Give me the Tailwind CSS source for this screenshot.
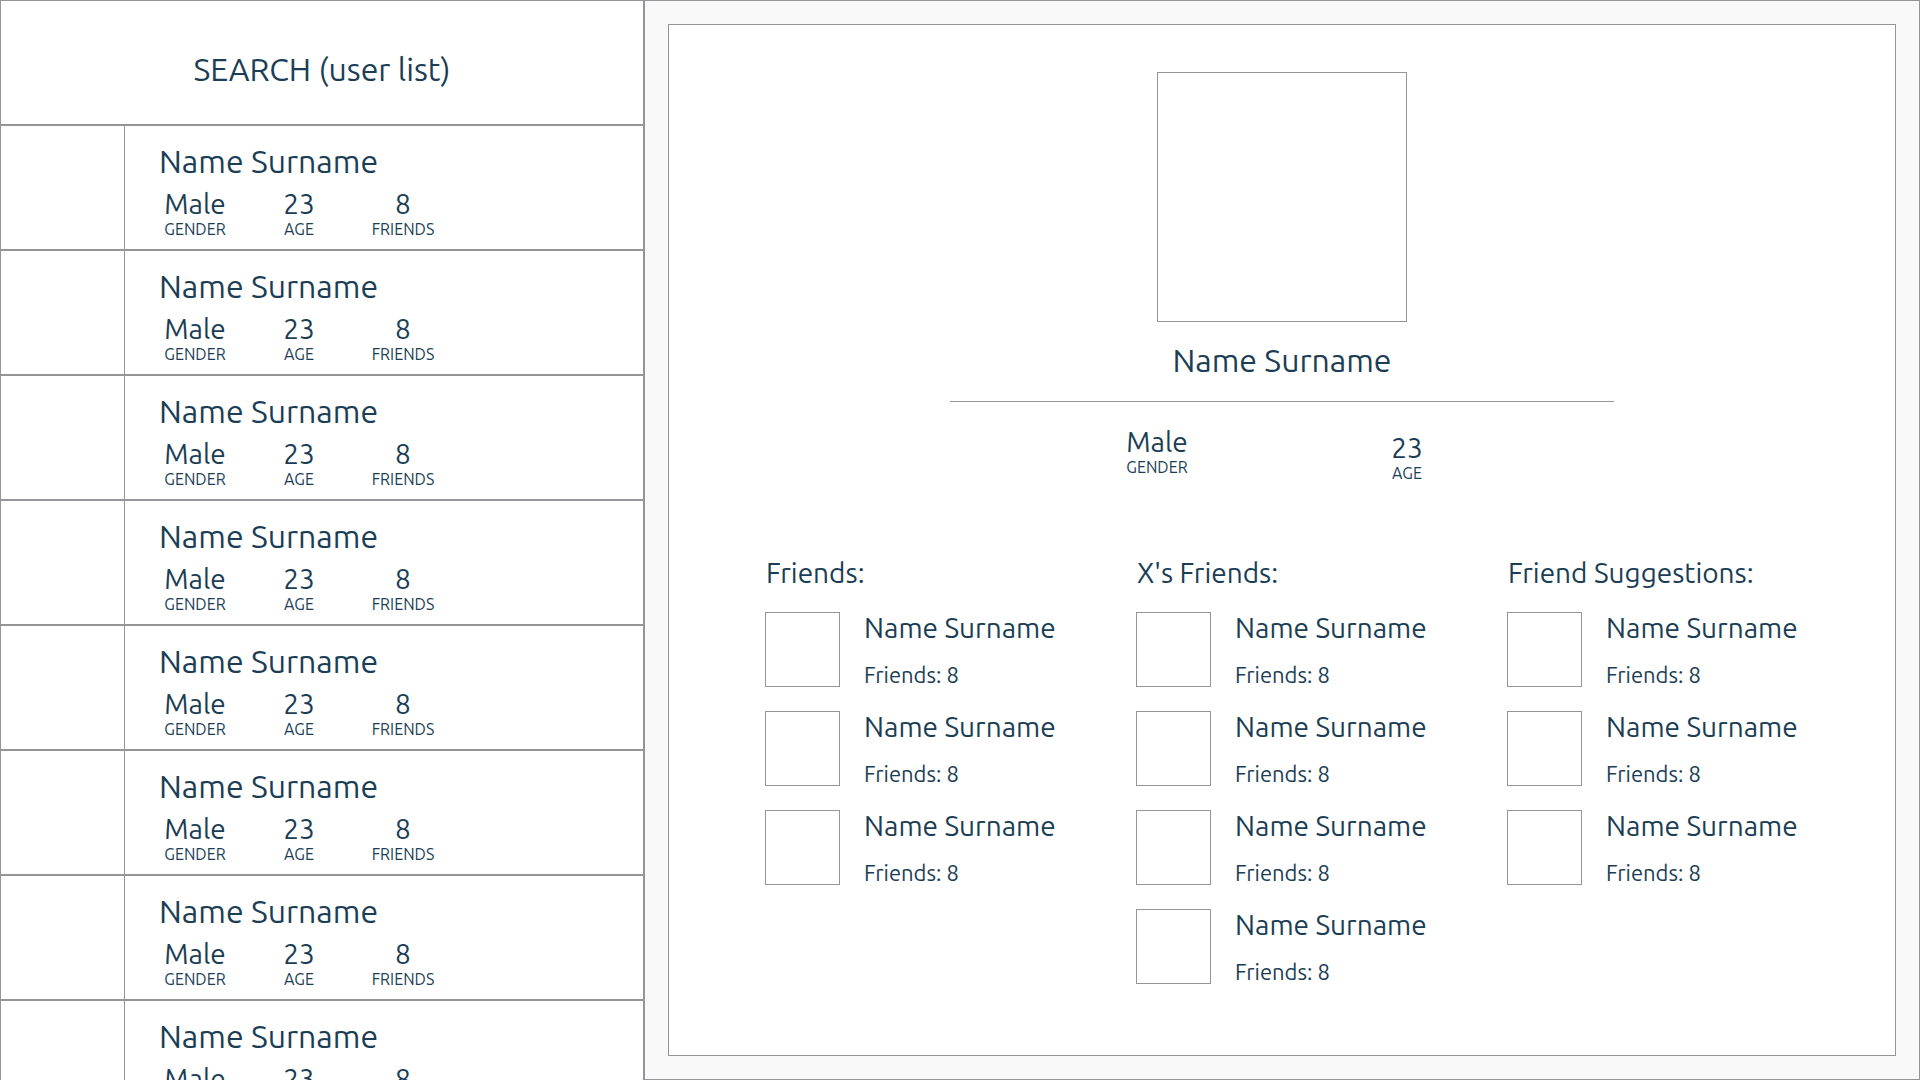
<!DOCTYPE html>
<html lang="en">
<head>
<meta charset="utf-8">
<title>User list</title>
<script src="https://cdn.jsdelivr.net/npm/@tailwindcss/browser@4"></script>
</head>
<body class="bg-white font-['Ubuntu','Noto_Sans',sans-serif] text-[#1b3e55]">
<div class="grid h-screen grid-cols-[644fr_1275fr] overflow-hidden border-t border-l border-[#939598]">
  <aside class="min-h-0 overflow-hidden border-r-2 border-[#939598]">
    <header class="flex h-[125px] items-center justify-center border-b-2 border-[#939598] pt-3">
      <h1 class="text-[32px] leading-10">SEARCH (user list)</h1>
    </header>
    <ul id="users"></ul>
  </aside>
  <main class="min-h-0 border-r border-b border-[#939598] bg-[#f9f9f9] p-[23px]">
    <section class="h-full border border-[#939598] bg-white pt-[47px]">
      <div class="flex flex-col items-center">
        <div class="size-[250px] border border-[#939598]"></div>
        <h2 class="mt-[18px] text-[32px] leading-10">Name Surname</h2>
        <hr class="mt-[21px] w-[664px] max-w-full border-[#939598]">
        <dl class="mt-6 flex items-start gap-[202px] pr-4">
          <div class="flex w-16 flex-col-reverse items-center"><dt class="text-[16px] leading-[18px]">GENDER</dt><dd class="text-[28px] leading-8">Male</dd></div>
          <div class="flex w-8 flex-col-reverse items-center pt-1.5"><dt class="text-[16px] leading-[18px]">AGE</dt><dd class="text-[28px] leading-8">23</dd></div>
        </dl>
      </div>
      <div class="mt-[73px] grid grid-cols-3 pr-[17px] pl-24">
        <section><h3 class="pl-px text-[28px] leading-9">Friends:</h3><ul class="mt-[21px] flex flex-col gap-6" data-count="3"></ul></section>
        <section><h3 class="pl-px text-[28px] leading-9">X's Friends:</h3><ul class="mt-[21px] flex flex-col gap-6" data-count="4"></ul></section>
        <section><h3 class="pl-px text-[28px] leading-9">Friend Suggestions:</h3><ul class="mt-[21px] flex flex-col gap-6" data-count="3"></ul></section>
      </div>
    </section>
  </main>
</div>

<template id="user-row">
  <li class="flex h-[125px] border-b-2 border-[#939598]">
    <div class="w-31 shrink-0 border-r border-[#939598]"></div>
    <div class="pt-[15px] pl-[34px]">
      <h2 class="text-[32px] leading-10">Name Surname</h2>
      <dl class="mt-[7px] flex gap-14 pl-1">
        <div class="flex w-16 flex-col-reverse items-center"><dt class="text-[16px] leading-[18px]">GENDER</dt><dd class="text-[28px] leading-8">Male</dd></div>
        <div class="flex w-8 flex-col-reverse items-center"><dt class="text-[16px] leading-[18px]">AGE</dt><dd class="text-[28px] leading-8">23</dd></div>
        <div class="flex w-16 flex-col-reverse items-center"><dt class="text-[16px] leading-[18px]">FRIENDS</dt><dd class="text-[28px] leading-8">8</dd></div>
      </dl>
    </div>
  </li>
</template>
<template id="friend-row">
  <li class="flex gap-6">
    <div class="size-[75px] shrink-0 border border-[#939598]"></div>
    <div class="flex flex-col justify-between">
      <h4 class="text-[28px] leading-8">Name Surname</h4>
      <p class="text-[22px] leading-6">Friends: 8</p>
    </div>
  </li>
</template>
<script>
  const fill = (list, id, count) => {
    for (let i = 0; i < count; i++) list.append(document.getElementById(id).content.cloneNode(true));
  };
  fill(document.getElementById('users'), 'user-row', 8);
  document.querySelectorAll('ul[data-count]').forEach(list => fill(list, 'friend-row', Number(list.dataset.count)));
</script>
</body>
</html>
